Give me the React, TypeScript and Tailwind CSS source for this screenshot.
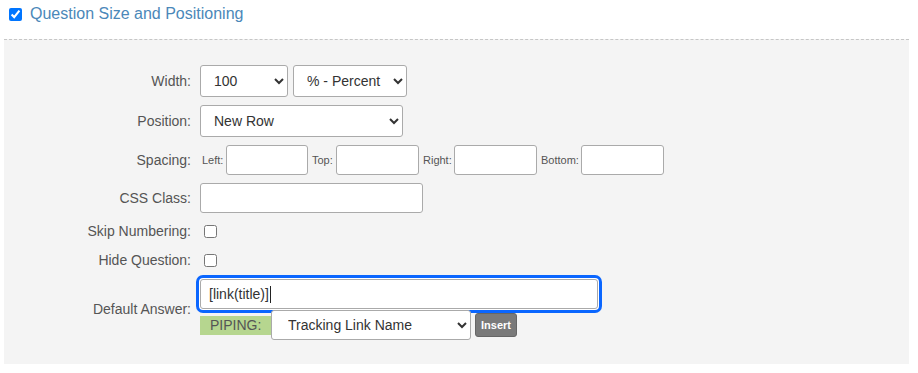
import React from "react";

const label = "w-[187px] shrink-0 text-right text-[14px] text-[#555]";
const field = "rounded-[3px] border border-[#aaa] bg-white text-[14px] text-[#333] outline-none";
const small = "text-[11px] text-[#555]";

function Row({ title, className = "", children }: { title: string; className?: string; children: React.ReactNode }) {
  return (
    <div className={`flex items-center ${className}`}>
      <div className={label}>{title}</div>
      <div className="ml-[9px] flex items-center">{children}</div>
    </div>
  );
}

export default function App() {
  return (
    <div className="min-h-screen bg-white font-['Liberation_Sans',Arial,sans-serif]">
      <div className="h-[39px] pl-[9px] pt-[4px]">
        <div className="flex h-[20px] items-center gap-[8px]">
          <input type="checkbox" defaultChecked className="h-[13px] w-[13px]" />
          <span className="text-[16px] text-[#4b88b9]">Question Size and Positioning</span>
        </div>
      </div>

      <div className="ml-[4px] w-[905px] border-t border-dashed border-[#c6c6c6] bg-[#f4f4f4] pb-[24px] pt-[25px]">
        <Row title="Width:">
          <select defaultValue="100" className={`${field} h-[32px] w-[88px] pl-[9px]`}>
            <option>100</option>
          </select>
          <select defaultValue="%" className={`${field} ml-[5px] h-[32px] w-[114px] pl-[9px]`}>
            <option value="%">% - Percent</option>
          </select>
        </Row>

        <Row title="Position:" className="mt-2">
          <select className={`${field} h-[32px] w-[203px] pl-[9px]`}>
            <option>New Row</option>
          </select>
        </Row>

        <Row title="Spacing:" className="mt-2">
          <span className={`ml-[2px] w-[24px] ${small}`}>Left:</span>
          <input className={`${field} h-[30px] w-[82px]`} />
          <span className={`ml-[4px] w-[24px] ${small}`}>Top:</span>
          <input className={`${field} h-[30px] w-[83px]`} />
          <span className={`ml-[4px] w-[31px] ${small}`}>Right:</span>
          <input className={`${field} h-[30px] w-[83px]`} />
          <span className={`ml-[4px] w-[40px] ${small}`}>Bottom:</span>
          <input className={`${field} h-[30px] w-[83px]`} />
        </Row>

        <Row title="CSS Class:" className="mt-2">
          <input className={`${field} h-[30px] w-[223px]`} />
        </Row>

        <Row title="Skip Numbering:" className="mt-2 h-[20px]">
          <input type="checkbox" className="ml-[4px] h-[13px] w-[13px]" />
        </Row>

        <Row title="Hide Question:" className="mt-[9px] h-[20px]">
          <input type="checkbox" className="ml-[4px] h-[13px] w-[13px]" />
        </Row>

        <Row title="Default Answer:" className="mt-[9px]">
          <div className="flex flex-col">
            <div className="flex h-[30px] w-[398px] items-center rounded-[3px] border border-[#aaa] bg-white pl-[8px] text-[14px] text-[#333] shadow-[0_0_0_1px_#fff,0_0_0_4px_#0a66ff]">
              [link(title)]<span className="ml-px h-[17px] w-px bg-[#222]" />
            </div>
            <div className="mt-px flex h-[30px] items-center">
              <span className="flex h-[19px] w-[72px] items-center bg-[#b6d68f] pl-[10px] text-[14px] text-[#555]">PIPING:</span>
              <select className={`${field} -ml-px h-[30px] w-[200px] pl-[12px]`}>
                <option>Tracking Link Name</option>
              </select>
              <button className="ml-[4px] h-[24px] w-[42px] rounded-[3px] border border-[#666] bg-[#7a7a7a] text-[11px] font-bold text-white">
                Insert
              </button>
            </div>
          </div>
        </Row>
      </div>
    </div>
  );
}
